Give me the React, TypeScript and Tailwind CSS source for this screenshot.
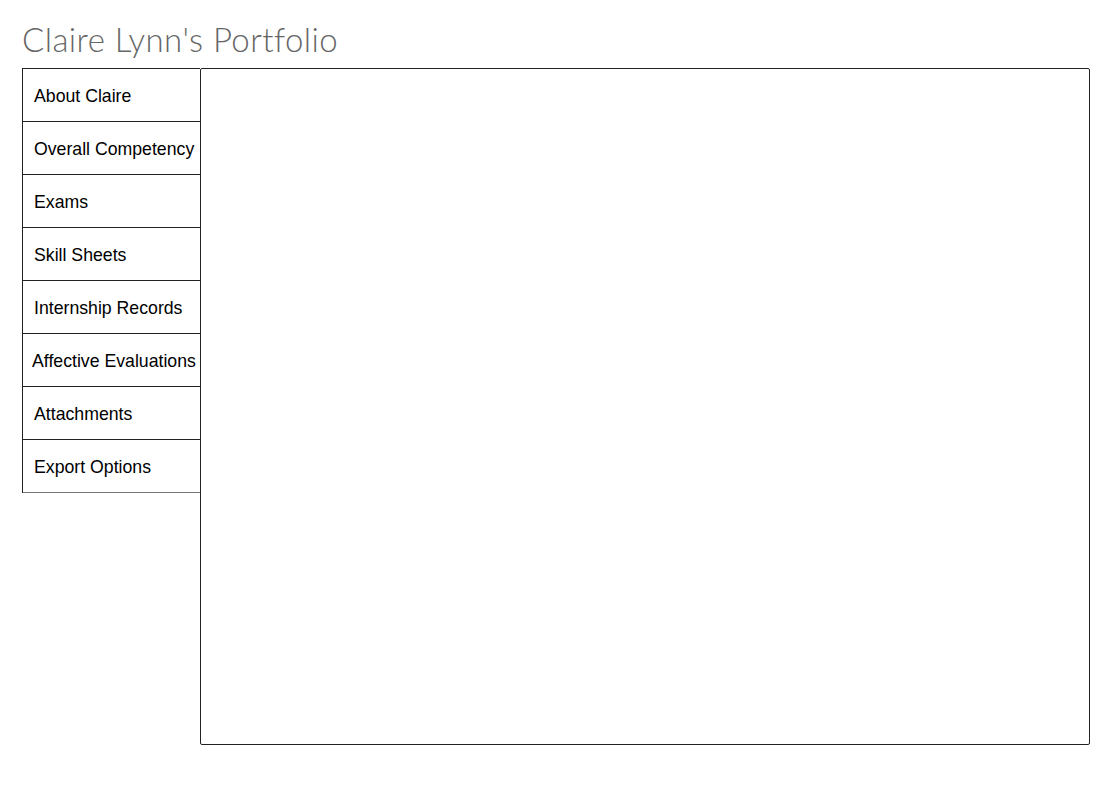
const items = [
  "About Claire",
  "Overall Competency",
  "Exams",
  "Skill Sheets",
  "Internship Records",
  "Affective Evaluations",
  "Attachments",
  "Export Options",
];

const App = () => {
  return (
    <div className="min-h-screen bg-white pl-[22px] pt-[19px]">
      <h1 className="text-[33px] leading-[40px] font-light text-[#666666] mb-[9px] font-['Lato',sans-serif] tracking-[0.4px]">
        Claire Lynn's Portfolio
      </h1>
      <div className="flex items-start font-['Liberation_Sans',Arial,sans-serif]">
        {/* Side menu */}
        <nav className="w-[178px] shrink-0 border-l border-[#222222] border-t border-t-[#222222]">
          {items.map((label, i) => (
            <div
              key={label}
              className={
                "h-[53px] flex items-center pt-[3px] border-b text-[17.7px] text-black whitespace-nowrap " +
                (i === items.length - 1 ? "border-[#777777] " : "border-[#222222] ") +
                (label === "Affective Evaluations" ? "pl-[9px]" : "pl-[11px]")
              }
            >
              {label}
            </div>
          ))}
        </nav>
        {/* Content panel */}
        <main className="w-[890px] h-[677px] border border-[#222222] rounded-[2px] bg-white"></main>
      </div>
    </div>
  );
};

export default App;
